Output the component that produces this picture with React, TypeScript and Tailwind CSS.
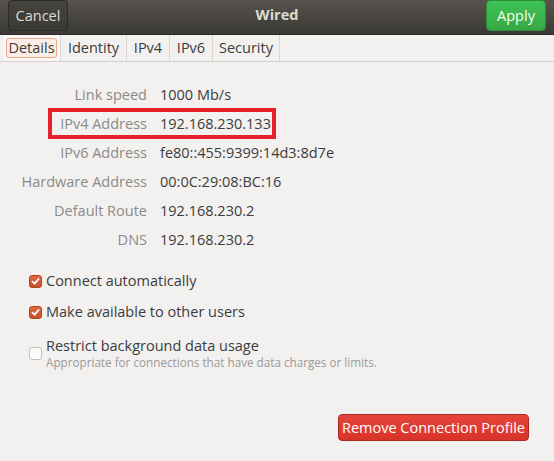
import React from "react";

const rows: [string, string][] = [
  ["Link speed", "1000 Mb/s"],
  ["IPv4 Address", "192.168.230.133"],
  ["IPv6 Address", "fe80::455:9399:14d3:8d7e"],
  ["Hardware Address", "00:0C:29:08:BC:16"],
  ["Default Route", "192.168.230.2"],
  ["DNS", "192.168.230.2"],
];

function Check({ on }: { on: boolean }) {
  if (on)
    return (
      <div className="w-[13px] h-[13px] rounded-[3px] bg-gradient-to-b from-[#e0683d] to-[#c4502a] border border-[#b04522] flex items-center justify-center shrink-0">
        <svg width="9" height="9" viewBox="0 0 9 9">
          <path d="M1.5 4.6 L3.6 6.7 L7.6 2" stroke="#fff" strokeWidth="1.8" fill="none" strokeLinecap="round" strokeLinejoin="round" />
        </svg>
      </div>
    );
  return <div className="w-[13px] h-[13px] rounded-[3px] bg-[#fbfbfb] border border-[#c3bfbb] shrink-0" />;
}

export default function App() {
  return (
    <div
      className="w-[554px] h-[461px] bg-[#f2f1f0] flex flex-col relative overflow-hidden"
      style={{ fontFamily: '"Open Sans", "Noto Sans", sans-serif' }}
    >
      {/* Header bar */}
      <div className="h-[35px] shrink-0 bg-gradient-to-b from-[#58544e] to-[#3a3935] border-b border-[#2a2926] flex items-start justify-between px-[8px] relative">
        <div className="h-[31px] w-[60px] rounded-[4px] border border-[#2b2a27] bg-gradient-to-b from-[#46443f] to-[#3a3935] text-[#dfdbd2] text-[14.5px] flex items-center justify-center">
          Cancel
        </div>
        <div className="absolute left-0 right-0 top-0 h-[30px] flex items-center justify-center text-[#dfdbd2] text-[14.5px] font-bold pointer-events-none">
          Wired
        </div>
        <div className="h-[31px] w-[60px] rounded-[4px] border border-[#2f8a3a] bg-gradient-to-b from-[#3fc354] to-[#36a846] text-[#f4fff4] text-[14.5px] flex items-center justify-center">
          Apply
        </div>
      </div>

      {/* Tabs */}
      <div className="h-[27px] shrink-0 border-b border-[#d4d0cb] flex items-stretch text-[14.5px] text-[#3c3c3c] pl-[3px]">
        <div className="w-[58px] bg-[#f8f7f6] border-r border-[#dcd8d4] flex items-center justify-center">
          <span className="px-[1px] leading-[18px] rounded-[3px] border border-[#f0a58a] bg-[#fbeee9]">Details</span>
        </div>
        <div className="w-[66px] border-r border-[#dcd8d4] flex items-center justify-center">Identity</div>
        <div className="w-[43px] border-r border-[#dcd8d4] flex items-center justify-center">IPv4</div>
        <div className="w-[43px] border-r border-[#dcd8d4] flex items-center justify-center">IPv6</div>
        <div className="w-[67px] border-r border-[#dcd8d4] flex items-center justify-center">Security</div>
      </div>

      {/* Details grid */}
      <div className="grid grid-cols-[147px_1fr] gap-x-[13px] pt-[18px] text-[14.5px]">
        {rows.map(([k, v]) => (
          <React.Fragment key={k}>
            <div className="h-[29px] flex items-center justify-end text-[#8c8a86]">{k}</div>
            <div className="h-[29px] flex items-center text-[#3c3c3c]">{v}</div>
          </React.Fragment>
        ))}
      </div>

      {/* Checkboxes */}
      <div className="flex flex-col pl-[29px] pt-[17px] text-[14.5px] text-[#3c3c3c]">
        <div className="h-[20px] flex items-center gap-[4px]">
          <Check on />
          <span>Connect automatically</span>
        </div>
        <div className="h-[20px] mt-[11px] flex items-center gap-[4px]">
          <Check on />
          <span>Make available to other users</span>
        </div>
        <div className="mt-[15px] flex items-center gap-[4px]">
          <Check on={false} />
          <div className="flex flex-col">
            <span className="leading-[18px]">Restrict background data usage</span>
            <span className="leading-[14px] text-[11.7px] text-[#9c9a96]">
              Appropriate for connections that have data charges or limits.
            </span>
          </div>
        </div>
      </div>

      {/* Remove button */}
      <div className="flex-1 flex items-end justify-end pr-[25px] pb-[20px]">
        <div className="w-[191px] h-[27px] rounded-[4px] border border-[#a8281f] bg-gradient-to-b from-[#e6453a] to-[#d8332a] text-white text-[14.5px] flex items-center justify-center">
          Remove Connection Profile
        </div>
      </div>

      {/* Annotation box */}
      <div className="absolute left-[48px] top-[108px] w-[228px] h-[31px] border-[4px] border-[#e8202a]" />
    </div>
  );
}
